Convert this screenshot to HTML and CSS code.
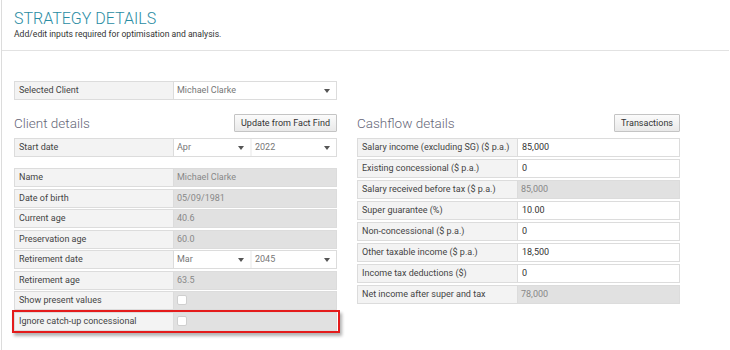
FILE: index.html
```html
<!DOCTYPE html>
<html>
<head>
<meta charset="utf-8">
<link rel="stylesheet" href="styles.css">
</head>
<body>
<div class="page">
  <header class="header">
    <h1 class="title">STRATEGY DETAILS</h1>
    <p class="subtitle">Add/edit inputs required for optimisation and analysis.</p>
  </header>
  <div class="content">
    <div class="row client-row">
      <div class="label">Selected Client</div>
      <div class="value select muted">Michael Clarke<span class="arrow"></span></div>
    </div>
    <div class="columns">
      <section class="col">
        <div class="col-head">
          <h2 class="col-title">Client details</h2>
          <button class="btn">Update from Fact Find</button>
        </div>
        <div class="row">
          <div class="label">Start date</div>
          <div class="value split">
            <div class="select month">Apr<span class="arrow"></span></div>
            <div class="select year">2022<span class="arrow"></span></div>
          </div>
        </div>
        <div class="rows left-rows">
          <div class="row"><div class="label">Name</div><div class="value ro">Michael Clarke</div></div>
          <div class="row"><div class="label">Date of birth</div><div class="value ro">05/09/1981</div></div>
          <div class="row"><div class="label">Current age</div><div class="value ro">40.6</div></div>
          <div class="row"><div class="label">Preservation age</div><div class="value ro">60.0</div></div>
          <div class="row">
            <div class="label">Retirement date</div>
            <div class="value split">
              <div class="select month">Mar<span class="arrow"></span></div>
              <div class="select year">2045<span class="arrow"></span></div>
            </div>
          </div>
          <div class="row"><div class="label">Retirement age</div><div class="value ro">63.5</div></div>
          <div class="row"><div class="label">Show present values</div><div class="value ro"><span class="check"></span></div></div>
          <div class="row highlighted"><div class="label">Ignore catch-up concessional</div><div class="value ro"><span class="check"></span></div></div>
        </div>
      </section>
      <section class="col">
        <div class="col-head">
          <h2 class="col-title">Cashflow details</h2>
          <button class="btn">Transactions</button>
        </div>
        <div class="rows right-rows">
          <div class="row"><div class="label">Salary income (excluding SG) ($ p.a.)</div><div class="value input">85,000</div></div>
          <div class="row"><div class="label">Existing concessional ($ p.a.)</div><div class="value input">0</div></div>
          <div class="row"><div class="label">Salary received before tax ($ p.a.)</div><div class="value ro">85,000</div></div>
          <div class="row"><div class="label">Super guarantee (%)</div><div class="value input">10.00</div></div>
          <div class="row"><div class="label">Non-concessional ($ p.a.)</div><div class="value input">0</div></div>
          <div class="row"><div class="label">Other taxable income ($ p.a.)</div><div class="value input">18,500</div></div>
          <div class="row"><div class="label">Income tax deductions ($)</div><div class="value input">0</div></div>
          <div class="row"><div class="label">Net income after super and tax</div><div class="value ro">78,000</div></div>
        </div>
      </section>
    </div>
  </div>
</div>
</body>
</html>
```
FILE: styles.css
```css
* { box-sizing: border-box; }
html, body { margin: 0; padding: 0; background: #fff; }
body { font-family: Roboto, "Liberation Sans", sans-serif; color: #333; }

.page {
  margin-left: 1px;
  border-left: 1px solid #dcdcdc;
  min-height: 350px;
}

.header {
  padding: 9px 0 0 12px;
  height: 51px;
  border-bottom: 1px solid #e2e2e2;
  margin-right: 1px;
}
.title {
  margin: 0;
  font-size: 16px;
  line-height: 19px;
  font-weight: 300;
  color: #2a8ca3;
}
.subtitle {
  margin: 1px 0 0;
  font-size: 8.6px;
  line-height: 11px;
  color: #333;
}

.content { padding: 30px 0 0 12px; }

.row {
  display: flex;
  width: 323px;
  height: 19px;
  border: 1px solid #dcdcdc;
  background: #f3f3f3;
  font-size: 9px;
  line-height: 17px;
}
.label {
  flex: none;
  width: 159px;
  padding-left: 4px;
  color: #444;
  white-space: nowrap;
  border-right: 1px solid #dcdcdc;
}
.right-rows .label { width: 160px; }
.value {
  flex: 1;
  position: relative;
  padding-left: 3px;
  white-space: nowrap;
}
.value.ro { background: #e1e1e1; color: #888; }
.value.input { background: #fff; color: #333; padding-left: 4px; }
.value.select { background: #fff; }
.muted { color: #777; }

.select { position: relative; background: #fff; padding-left: 3px; color: #777; }
.arrow {
  position: absolute;
  right: 6px;
  top: 7px;
  width: 0;
  height: 0;
  border-left: 3px solid transparent;
  border-right: 3px solid transparent;
  border-top: 4px solid #555;
}
.value.split { display: flex; gap: 2px; padding: 0; background: #f3f3f3; }
.split .month { width: 76px; }
.split .year { flex: 1; }

.columns { display: flex; gap: 20px; margin-top: 14px; }
.col { width: 323px; }
.col-head {
  display: flex;
  justify-content: space-between;
  align-items: center;
  height: 18px;
  margin-bottom: 6px;
}
.col-title {
  margin: 0;
  font-size: 13.5px;
  line-height: 18px;
  font-weight: 300;
  color: #666778;
}
.btn {
  height: 18px;
  padding: 0 6px;
  font-family: inherit;
  font-size: 9px;
  color: #333;
  border: 1px solid #c4c4c4;
  background: linear-gradient(#fbfbfb, #e9e9e9);
  border-radius: 1px;
}

.rows { display: flex; flex-direction: column; }
.left-rows { margin-top: 11px; gap: 1.5px; }
.right-rows { gap: 2px; }

.check {
  position: absolute;
  left: 3px;
  top: 3px;
  width: 10px;
  height: 10px;
  background: #fff;
  border: 1px solid #cfcfcf;
  border-radius: 2px;
}

.highlighted { position: relative; }
.highlighted::after {
  content: "";
  position: absolute;
  left: -3px;
  top: -3px;
  right: -4px;
  bottom: -3px;
  border: 2px solid #e41b1b;
  box-shadow: 2px 3px 3px rgba(0,0,0,0.3);
  pointer-events: none;
}
```
